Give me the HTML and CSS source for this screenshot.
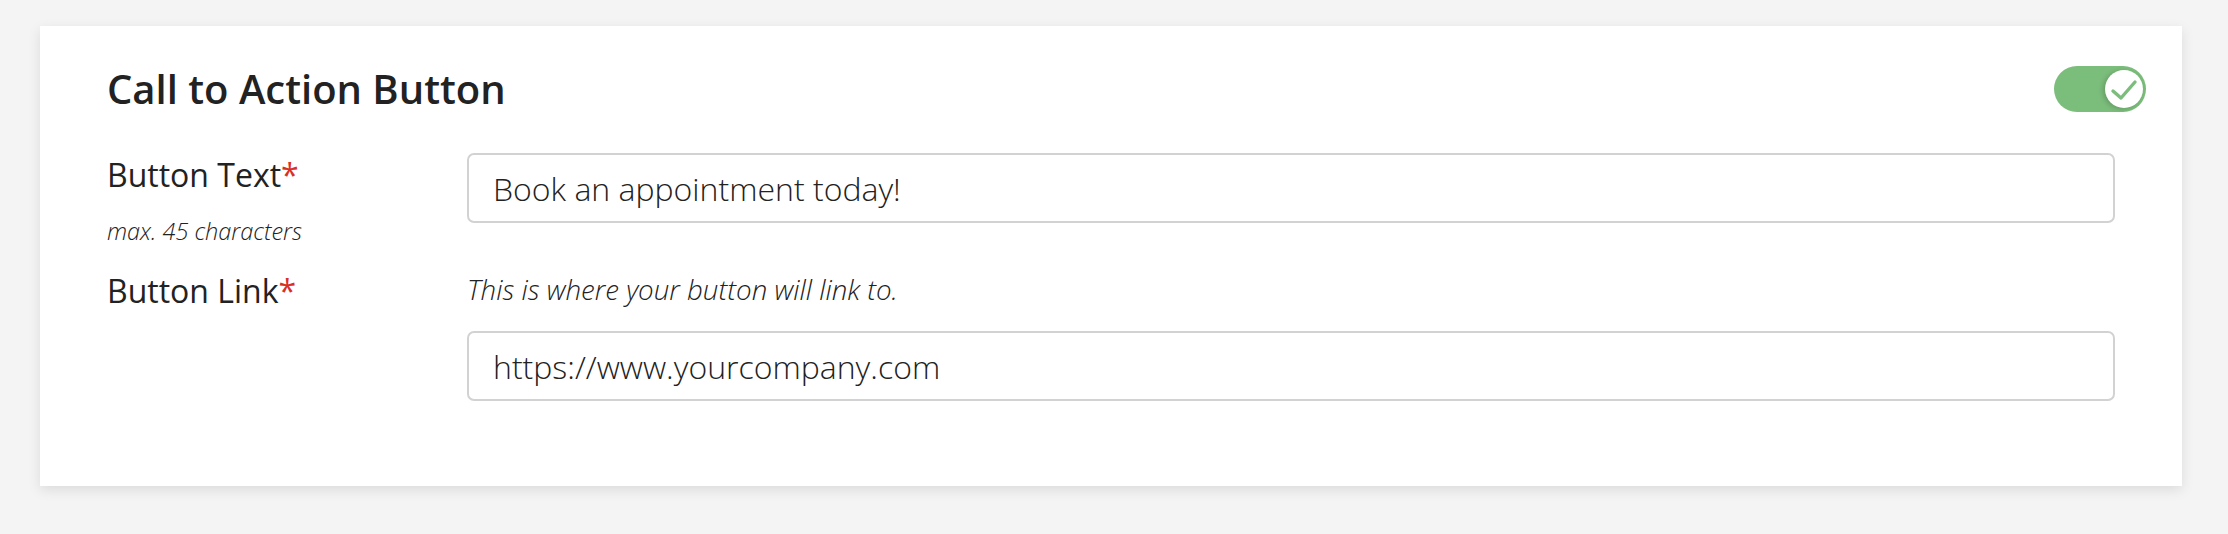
FILE: index.html
```html
<!DOCTYPE html>
<html>
  <head>
    <link rel="stylesheet" href="styles.css">
    <title>Call to Action Button</title>
  </head>

  <body>
    <div class="card">
      <div class="card-head">
        <p class="title">Call to Action Button</p>
        <button class="toggle on">
          <span class="knob">
            <svg viewBox="0 0 38 38" width="38" height="38">
              <path d="M8 21 L16 28 L30 12" fill="none" stroke="#7bbd7b" stroke-width="3.4" stroke-linecap="round" stroke-linejoin="round"/>
            </svg>
          </span>
        </button>
      </div>

      <div class="field">
        <div class="label-col">
          <p class="label">Button Text<span class="req">*</span></p>
          <p class="sub">max. 45 characters</p>
        </div>
        <div class="input-col">
          <input class="text-input" type="text" value="Book an appointment today!">
        </div>
      </div>

      <div class="field">
        <div class="label-col">
          <p class="label">Button Link<span class="req">*</span></p>
        </div>
        <div class="input-col">
          <p class="hint">This is where your button will link to.</p>
          <input class="text-input" type="text" value="https://www.yourcompany.com">
        </div>
      </div>
    </div>
  </body>
</html>
```

FILE: styles.css
```css
body{
  margin: 0;
  padding: 26px 46px 48px 40px;
  background-color: #f4f4f4;
  color: #222222;
  font-family: "Open Sans", Arial, sans-serif;
}

p{
  margin: 0;
}

.card{
  background-color: white;
  padding: 40px 67px 85px 67px;
  box-shadow: 0 4px 12px rgba(0, 0, 0, 0.10);
}

.card-head{
  display: flex;
  align-items: center;
  justify-content: space-between;
  margin-right: -31px;
  margin-bottom: 41px;
}

.title{
  font-size: 40px;
  font-weight: 600;
  line-height: 46px;
}

.toggle{
  width: 92px;
  height: 46px;
  border: none;
  border-radius: 100px;
  background-color: #7bbd7b;
  padding: 0 3px;
  display: flex;
  align-items: center;
  justify-content: flex-end;
  cursor: pointer;
}

.knob{
  width: 38px;
  height: 38px;
  border-radius: 50%;
  background-color: white;
  box-shadow: -2px 1px 5px rgba(0, 0, 0, 0.18);
  display: flex;
}

.field{
  display: grid;
  grid-template-columns: 360px 1fr;
  margin-bottom: 22px;
}

.field:last-child{
  margin-bottom: 0;
}

.label{
  font-size: 32px;
  line-height: 44px;
}

.req{
  color: #d93025;
}

.sub{
  margin-top: 18px;
  font-size: 23.5px;
  font-weight: 300;
  font-style: italic;
  line-height: 32px;
}

.hint{
  font-size: 27.7px;
  font-weight: 300;
  font-style: italic;
  line-height: 40px;
  margin-bottom: 22px;
}

.text-input{
  display: block;
  box-sizing: border-box;
  width: 100%;
  height: 70px;
  border: 2px solid #d2d2d2;
  border-radius: 7px;
  padding: 0 24px;
  font-family: "Open Sans", Arial, sans-serif;
  font-size: 32px;
  font-weight: 300;
  color: #222222;
  outline: none;
}
```
